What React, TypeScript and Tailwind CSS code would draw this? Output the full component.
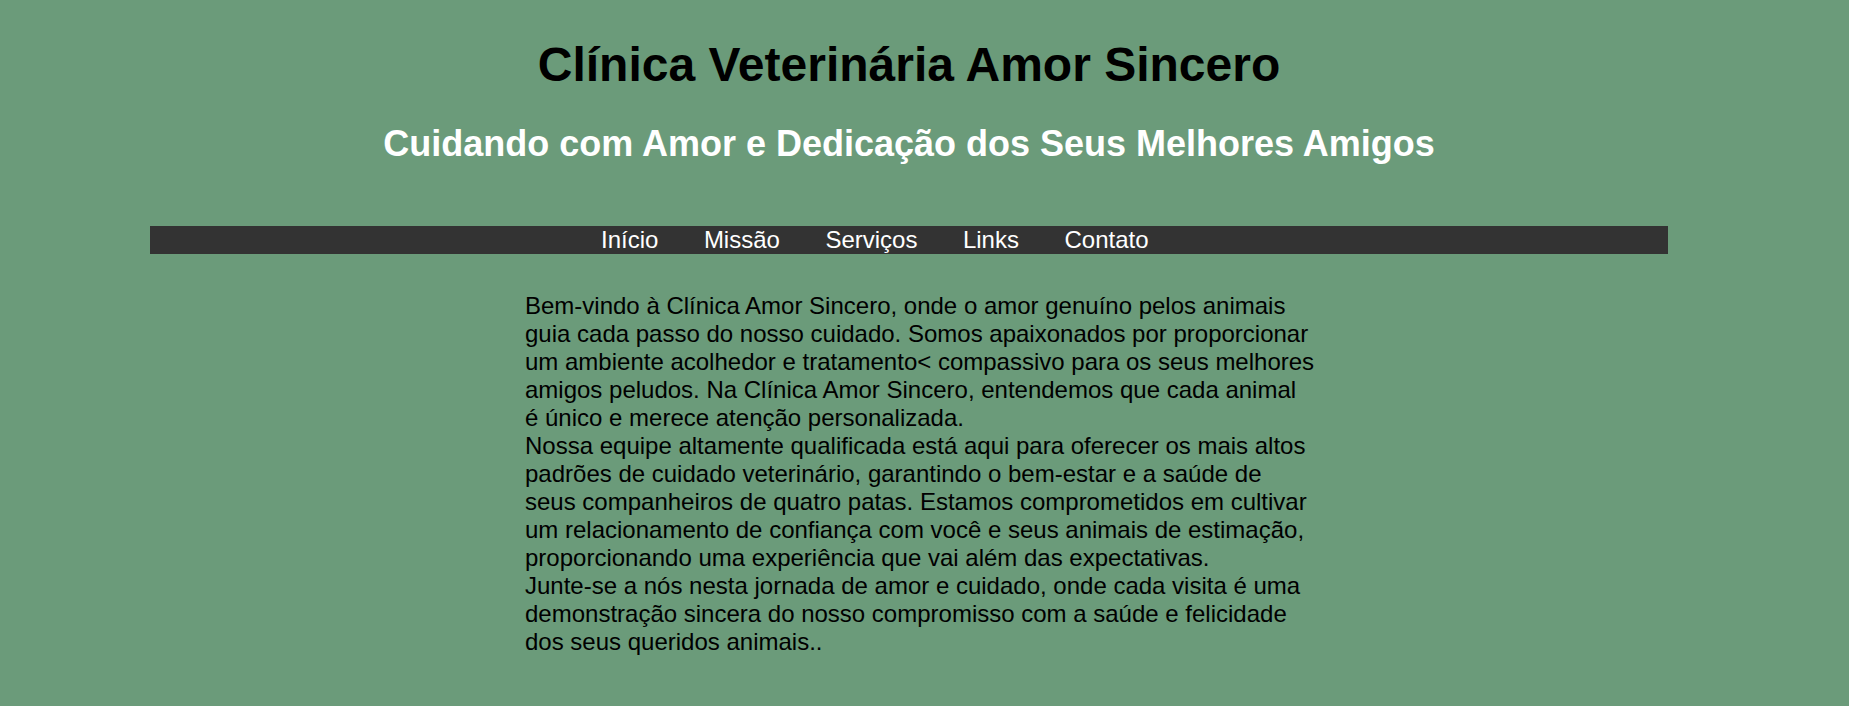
import React from 'react';

const links = ['Início', 'Missão', 'Serviços', 'Links', 'Contato'];

const App: React.FC = () => {
  return (
    <div className="min-h-screen w-full bg-[#6b9b7a] font-['Liberation_Sans',Arial,sans-serif]">
      <div className="w-[1818px] pt-[37px] pb-[60px]">
        {/* header */}
        <header className="text-center">
          <h1 className="text-[48px] leading-[55px] font-bold text-black">Clínica Veterinária Amor Sincero</h1>
          <h2 className="mt-[31px] text-[36px] leading-[41px] font-bold text-white">
            Cuidando com Amor e Dedicação dos Seus Melhores Amigos
          </h2>
        </header>

        {/* menu */}
        <nav className="mx-[150px] mt-[62px] h-[28px] bg-[#333333]">
          <ul className="flex gap-[45.5px] pl-[451px]">
            {links.map((l) => (
              <li key={l}>
                <a href="#" className="text-[24px] leading-[28px] text-white">{l}</a>
              </li>
            ))}
          </ul>
        </nav>

        {/* conteúdo */}
        <main className="ml-[525px] mt-[38px] w-[792px] text-[24px] leading-[28px] text-black">
          <p>
            Bem-vindo à Clínica Amor Sincero, onde o amor genuíno pelos animais guia cada passo do nosso cuidado.
            Somos apaixonados por proporcionar um ambiente acolhedor e tratamento&lt; compassivo para os seus melhores
            amigos peludos. Na Clínica Amor Sincero, entendemos que cada animal
            <br />é único e merece atenção personalizada.
          </p>
          <p>
            Nossa equipe altamente qualificada está aqui para oferecer os mais altos padrões de cuidado veterinário,
            garantindo o bem-estar e a saúde de seus companheiros de quatro patas. Estamos comprometidos em cultivar
            um relacionamento de confiança com você e seus animais de estimação, proporcionando uma experiência que
            vai além das expectativas.
          </p>
          <p>
            Junte-se a nós nesta jornada de amor e cuidado, onde cada visita é uma demonstração sincera do nosso
            compromisso com a saúde e felicidade dos seus queridos animais..
          </p>
        </main>
      </div>
    </div>
  );
};

export default App;
